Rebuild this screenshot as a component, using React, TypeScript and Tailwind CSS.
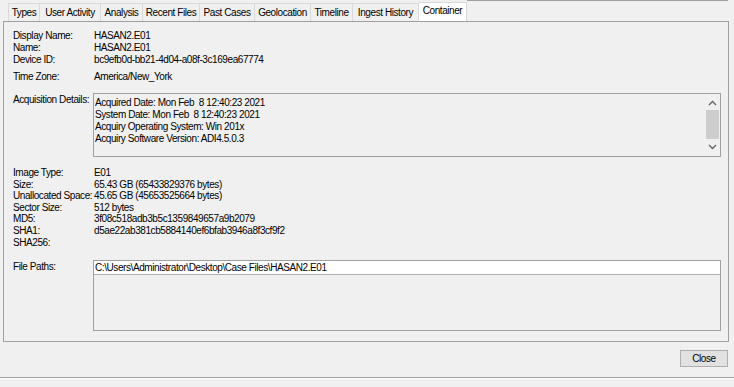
import React from "react";

const tabs: { name: string; w: string; active?: boolean }[] = [
  { name: "Types", w: "w-[32px]" },
  { name: "User Activity", w: "w-[61px]" },
  { name: "Analysis", w: "w-[42px]" },
  { name: "Recent Files", w: "w-[57px]" },
  { name: "Past Cases", w: "w-[55px]" },
  { name: "Geolocation", w: "w-[56px]" },
  { name: "Timeline", w: "w-[42px]" },
  { name: "Ingest History", w: "w-[66px]" },
  { name: "Container", w: "w-[48px]", active: true },
];

function Row({ label, value }: { label: string; value?: string }) {
  return (
    <div className="grid grid-cols-[80px_1fr]">
      <div>{label}</div>
      <div className="pl-[1px] whitespace-pre">{value ?? ""}</div>
    </div>
  );
}

export default function App() {
  return (
    <div className="w-[734px] h-[387px] bg-[#f0f0f0] overflow-hidden text-[10px] text-black tracking-[-0.42px] font-['Liberation_Sans',Arial,sans-serif] flex flex-col">
      {/* tab strip */}
      <div className="h-[21px] flex items-end pl-[8px] shrink-0">
        {tabs.map((t, i) => (
          <div
            key={t.name}
            className={
              t.active
                ? `${t.w} h-[19px] bg-white border-r border-t border-[#d9d9d9] text-center leading-[15px] whitespace-nowrap`
                : `${t.w} h-[18px] bg-[#f0f0f0] border-r border-t border-[#d9d9d9] ${i === 0 ? "border-l" : ""} text-center leading-[17px] whitespace-nowrap`
            }
          >
            {t.name}
          </div>
        ))}
        <div className="self-stretch flex-1 border-t border-[#a0a0a0] mr-[6px]" />
      </div>

      {/* panel */}
      <div className="ml-[3px] w-[726px] h-[321px] shrink-0 border border-[#a0a0a0] pl-[9px] pr-[7px] pt-[8px] flex flex-col">
        <div className="leading-[12px]">
          <Row label="Display Name:" value="HASAN2.E01" />
          <Row label="Name:" value="HASAN2.E01" />
          <Row label="Device ID:" value="bc9efb0d-bb21-4d04-a08f-3c169ea67774" />
        </div>
        <div className="leading-[12px] mt-[5px]">
          <Row label="Time Zone:" value="America/New_York" />
        </div>

        {/* acquisition details */}
        <div className="grid grid-cols-[80px_1fr] mt-[10px]">
          <div className="pt-[1px] leading-[12px]">Acquisition Details:</div>
          <div className="h-[64px] border border-[#a0a0a0] flex">
            <div className="flex-1 pl-[1px] pt-[3px] leading-[12px] whitespace-pre">
              <div>Acquired Date: Mon Feb  8 12:40:23 2021</div>
              <div>System Date: Mon Feb  8 12:40:23 2021</div>
              <div>Acquiry Operating System: Win 201x</div>
              <div>Acquiry Software Version: ADI4.5.0.3</div>
            </div>
            <div className="w-[14px] mr-[1px] flex flex-col items-center">
              <svg width="9" height="6" viewBox="0 0 9 6" className="mt-[6px]">
                <path d="M1 5 L4.5 1.5 L8 5" fill="none" stroke="#606060" strokeWidth="1.3" />
              </svg>
              <div className="w-[13px] h-[29px] bg-[#cdcdcd] mt-[4px]" />
              <svg width="9" height="6" viewBox="0 0 9 6" className="mt-[5px]">
                <path d="M1 1 L4.5 4.5 L8 1" fill="none" stroke="#606060" strokeWidth="1.3" />
              </svg>
            </div>
          </div>
        </div>

        {/* image info */}
        <div className="leading-[11.6px] mt-[10px]">
          <Row label="Image Type:" value="E01" />
          <Row label="Size:" value="65.43 GB (65433829376 bytes)" />
          <Row label="Unallocated Space:" value="45.65 GB (45653525664 bytes)" />
          <Row label="Sector Size:" value="512 bytes" />
          <Row label="MD5:" value="3f08c518adb3b5c1359849657a9b2079" />
          <Row label="SHA1:" value="d5ae22ab381cb5884140ef6bfab3946a8f3cf9f2" />
          <Row label="SHA256:" />
        </div>

        {/* file paths */}
        <div className="grid grid-cols-[80px_1fr] mt-[12px]">
          <div className="pt-[1px] leading-[12px]">File Paths:</div>
          <div className="h-[71px] border border-[#a0a0a0]">
            <div className="h-[14px] bg-white border-b border-[#b0b0b0] pl-[1px] leading-[13px] whitespace-pre">
              C:\Users\Administrator\Desktop\Case Files\HASAN2.E01
            </div>
          </div>
        </div>
      </div>

      {/* buttons */}
      <div className="flex justify-end pr-[6px] mt-[8px] shrink-0">
        <button className="w-[48px] h-[17px] bg-[#e1e1e1] border border-[#adadad] text-[10px] leading-[15px] text-center tracking-[-0.42px]">
          Close
        </button>
      </div>
      <div className="mt-[10px] h-[1px] bg-[#a0a0a0] shrink-0" />
      <div className="h-[1px] bg-white shrink-0" />
    </div>
  );
}
